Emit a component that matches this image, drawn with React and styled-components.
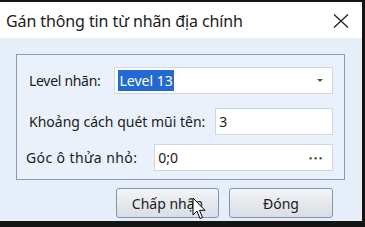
import React from 'react';
import styled, { createGlobalStyle } from 'styled-components';

const GlobalStyle = createGlobalStyle`
  html, body {
    margin: 0;
    padding: 0;
    background: #141414;
    overflow: hidden;
  }
`;

const Screen = styled.div`
  width: 365px;
  height: 227px;
  padding-top: 2px;
  box-sizing: border-box;
  background: #141414;
  font-family: "Noto Sans", "Open Sans", sans-serif;
  color: #1b1b1b;
  position: relative;
`;

const Window = styled.div`
  width: 362px;
  height: 219px;
  display: flex;
  flex-direction: column;
  background: #e6eef9;
`;

const TitleBar = styled.div`
  height: 36px;
  flex: none;
  display: flex;
  align-items: center;
  justify-content: space-between;
  padding: 2px 12px 0 6px;
  box-sizing: border-box;
  background: #ffffff;
`;

const Title = styled.span`
  font-size: 16px;
  letter-spacing: -0.1px;
`;

const CloseButton = styled.button`
  width: 18px;
  height: 16px;
  padding: 0;
  border: 0;
  background: none;
  display: flex;
  align-items: center;
  justify-content: center;
`;

const Body = styled.div`
  flex: 1;
  display: flex;
  flex-direction: column;
  padding: 16px 17px 0 16px;
`;

const Group = styled.div`
  height: 126px;
  box-sizing: border-box;
  border: 1px solid #8c9bb3;
  background: #eaf1fb;
  padding: 12px 11px 0 12px;
  display: flex;
  flex-direction: column;
`;

const Row = styled.div`
  display: flex;
  align-items: center;
  margin-top: ${(p) => p.$gap || 0}px;
`;

const Label = styled.label`
  font-size: 14px;
  white-space: nowrap;
  letter-spacing: ${(p) => p.$spacing || 0}px;
  margin-left: ${(p) => p.$shift || 0}px;
  margin-right: ${(p) => p.$space || 10}px;
`;

const Field = styled.div`
  flex: 1;
  height: 27px;
  box-sizing: border-box;
  border: 1px solid #cfd6e1;
  background: #ffffff;
  display: flex;
  align-items: center;
  padding: 0 6px 0 3px;
  font-size: 14px;
`;

const Value = styled.span`
  flex: 1;
`;

const Selected = styled.span`
  background: #2369d4;
  color: #ffffff;
  padding: 1px 1px;
`;

const Caret = styled.span`
  width: 0;
  height: 0;
  border-left: 3px solid transparent;
  border-right: 3px solid transparent;
  border-top: 3px solid #555;
  margin-right: 3px;
`;

const Dots = styled.span`
  font-size: 6px;
  letter-spacing: 1.5px;
  color: #555;
  margin-right: 2px;
`;

const Buttons = styled.div`
  display: flex;
  justify-content: flex-end;
  gap: 10px;
  padding-right: 12px;
  margin-top: 8px;
`;

const Button = styled.button`
  width: ${(p) => p.$w}px;
  height: 30px;
  border: 1px solid #8593aa;
  border-radius: 3px;
  background: linear-gradient(#f4f5f7, #e5e8ed 50%, #dadee5);
  font-family: inherit;
  font-size: 14px;
  color: #1b1b1b;
  padding: 0;
`;

const Cursor = styled.svg`
  position: absolute;
  left: 192px;
  top: 197px;
`;

export default function App() {
  return (
    <>
      <GlobalStyle />
      <Screen>
        <Window>
          <TitleBar>
            <Title>Gán thông tin từ nhãn địa chính</Title>
            <CloseButton aria-label="Đóng">
              <svg width="16" height="14" viewBox="0 0 16 14">
                <path d="M1 0.5 L15 13.5 M15 0.5 L1 13.5" stroke="#222" strokeWidth="1.3" fill="none" />
              </svg>
            </CloseButton>
          </TitleBar>
          <Body>
            <Group>
              <Row>
                <Label $spacing={-0.3} $space={14}>Level nhãn:</Label>
                <Field>
                  <Value><Selected>Level 13</Selected></Value>
                  <Caret />
                </Field>
              </Row>
              <Row $gap={14}>
                <Label>Khoảng cách quét mũi tên:</Label>
                <Field>
                  <Value>3</Value>
                </Field>
              </Row>
              <Row $gap={9}>
                <Label $shift={-3} $spacing={0.4} $space={17}>Góc ô thửa nhỏ:</Label>
                <Field>
                  <Value>0;0</Value>
                  <Dots>●●●</Dots>
                </Field>
              </Row>
            </Group>
            <Buttons>
              <Button $w={103}>Chấp nhận</Button>
              <Button $w={104}>Đóng</Button>
            </Buttons>
          </Body>
        </Window>
        <Cursor width="14" height="23" viewBox="0 0 14 23">
          <path d="M1 1 L1 18 L5 14 L8 21.5 L10.5 20.5 L7.5 13.3 L13 13.3 Z" fill="#fff" stroke="#000" strokeWidth="1" strokeLinejoin="round" />
        </Cursor>
      </Screen>
    </>
  );
}
